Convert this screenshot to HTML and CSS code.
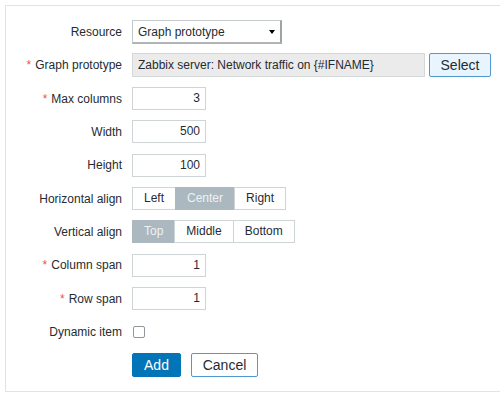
FILE: index.html
```html
<!DOCTYPE html>
<html lang="en">
<head>
    <meta charset="UTF-8">
    <title>Graph prototype widget</title>
    <link rel="stylesheet" href="styles.css">
</head>
<body>
    <div class="form-box">
        <div class="form-grid">
            <label class="lbl">Resource</label>
            <div class="ctl">
                <div class="select-box">Graph prototype<span class="arrow"></span></div>
            </div>

            <label class="lbl"><span class="req">*</span>Graph prototype</label>
            <div class="ctl">
                <div class="input ro">Zabbix server: Network traffic on {#IFNAME}</div>
                <button class="btn-alt">Select</button>
            </div>

            <label class="lbl"><span class="req">*</span>Max columns</label>
            <div class="ctl"><div class="input num">3</div></div>

            <label class="lbl">Width</label>
            <div class="ctl"><div class="input num">500</div></div>

            <label class="lbl">Height</label>
            <div class="ctl"><div class="input num">100</div></div>

            <label class="lbl">Horizontal align</label>
            <div class="ctl">
                <div class="segmented">
                    <span class="seg">Left</span>
                    <span class="seg on">Center</span>
                    <span class="seg">Right</span>
                </div>
            </div>

            <label class="lbl">Vertical align</label>
            <div class="ctl">
                <div class="segmented">
                    <span class="seg on">Top</span>
                    <span class="seg">Middle</span>
                    <span class="seg">Bottom</span>
                </div>
            </div>

            <label class="lbl"><span class="req">*</span>Column span</label>
            <div class="ctl"><div class="input num">1</div></div>

            <label class="lbl"><span class="req">*</span>Row span</label>
            <div class="ctl"><div class="input num">1</div></div>

            <label class="lbl">Dynamic item</label>
            <div class="ctl"><span class="checkbox"></span></div>

            <div></div>
            <div class="ctl buttons">
                <button class="btn-main">Add</button>
                <button class="btn-alt cancel">Cancel</button>
            </div>
        </div>
    </div>
</body>
</html>
```

FILE: styles.css
```css
html, body { margin: 0; overflow: hidden; background: #fff; }
body { font-family: "Liberation Sans", Arial, sans-serif; font-size: 12px; color: #1f2c33; }

.form-box { margin: 5px 0 0 5px; border: 1px solid #dfe4e7; border-right: none; padding: 14px 0 14px 0; }
.form-grid { display: grid; grid-template-columns: 116px 1fr; column-gap: 10px; row-gap: 9.33px; grid-auto-rows: 24px; }

.lbl { display: flex; align-items: center; justify-content: flex-end; white-space: nowrap; }
.req { color: #e45959; margin-right: 4px; font-size: 12px; }
.ctl { display: flex; align-items: center; }

.select-box { position: relative; box-sizing: border-box; width: 150px; height: 24px; line-height: 22px; padding-left: 5px; border: 1px solid #c4c9cc; border-right: 2px solid #9ea3a6; border-bottom: 2px solid #b0b4b7; }
.arrow { position: absolute; right: 5px; top: 9px; width: 0; height: 0; border-left: 3px solid transparent; border-right: 3px solid transparent; border-top: 4px solid #000; }

.input { box-sizing: border-box; height: 23px; line-height: 21px; border: 1px solid #cfd4d6; padding: 0 5px; background: #fff; }
.input.num { width: 74px; text-align: right; }
.input.ro { width: 293px; height: 24px; line-height: 22px; background: #ebebeb; border-color: #d5d8d9; }

button { font-family: "Liberation Sans", Arial, sans-serif; font-size: 14px; cursor: pointer; }
.btn-alt { box-sizing: border-box; width: 62px; height: 24px; margin-left: 4px; padding: 0; background: #e8f4fe; border: 1px solid #4f9ad0; border-radius: 2px; color: #1f2c33; }
.btn-main { box-sizing: border-box; width: 49px; height: 24px; padding: 0; background: #0275b8; border: 1px solid #0275b8; border-radius: 2px; color: #fff; }
.buttons .cancel { width: 67px; margin-left: 10px; background: #fff; }

.segmented { display: flex; height: 23px; }
.seg { box-sizing: border-box; height: 23px; line-height: 21px; padding: 0 11px; border: 1px solid #cfd4d6; background: #fff; }
.seg + .seg { margin-left: -1px; }
.seg.on { background: #abb8c0; border-color: #abb8c0; color: #eef2f4; }

.checkbox { box-sizing: border-box; width: 12px; height: 12px; margin-left: 1px; border: 1px solid #8e979c; border-radius: 2px; background: #fff; }
```
